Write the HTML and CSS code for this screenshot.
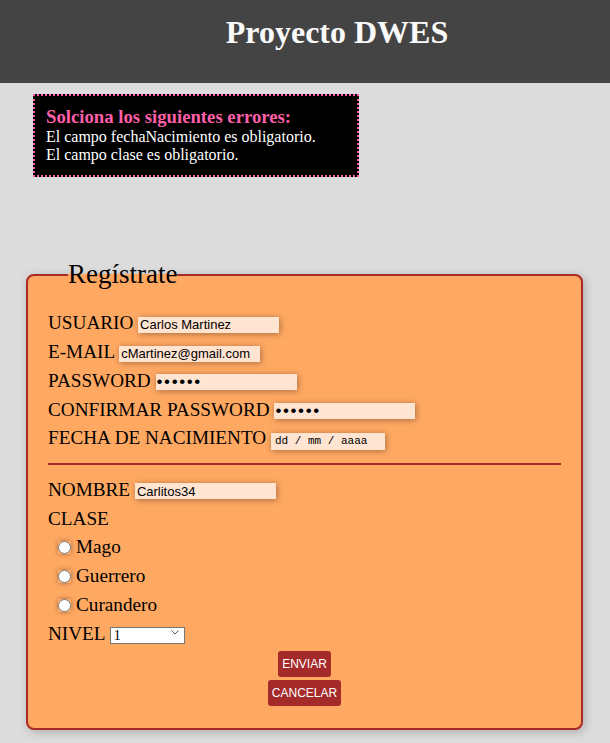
FILE: index.html
```html
<!DOCTYPE html>
<html lang="es">
<head>
<meta charset="utf-8">
<title>Proyecto DWES</title>
<link rel="stylesheet" href="styles.css">
</head>
<body>
<header class="top">
  <h1 class="title">Proyecto DWES</h1>
</header>
<main class="main">
  <div class="errors">
    <h3 class="errors-title">Solciona los siguientes errores:</h3>
    <p class="errors-line">El campo fechaNacimiento es obligatorio.</p>
    <p class="errors-line">El campo clase es obligatorio.</p>
  </div>
  <form class="form">
    <fieldset class="box">
      <legend class="legend">Regístrate</legend>
      <div class="row">USUARIO <input class="field" type="text" value="Carlos Martinez"></div>
      <div class="row">E-MAIL <input class="field" type="email" value="cMartinez@gmail.com"></div>
      <div class="row">PASSWORD <input class="field pass" type="password" value="123456"></div>
      <div class="row">CONFIRMAR PASSWORD <input class="field pass" type="password" value="123456"></div>
      <div class="row">FECHA DE NACIMIENTO <input class="field date" type="text" placeholder="dd / mm / aaaa"></div>
      <hr class="sep">
      <div class="row">NOMBRE <input class="field" type="text" value="Carlitos34"></div>
      <div class="row">CLASE</div>
      <div class="row radio-row"><label class="opt"><input class="radio" type="radio" name="clase">Mago</label></div>
      <div class="row radio-row"><label class="opt"><input class="radio" type="radio" name="clase">Guerrero</label></div>
      <div class="row radio-row"><label class="opt"><input class="radio" type="radio" name="clase">Curandero</label></div>
      <div class="row">NIVEL <span class="select-wrap"><select class="select"><option>1</option><option>2</option><option>3</option></select><svg class="chev" width="8" height="5" viewBox="0 0 8 5"><path d="M0.5 0.5 L4 4 L7.5 0.5" fill="none" stroke="#555" stroke-width="1"/></svg></span></div>
      <div class="actions">
        <button class="btn" type="submit">ENVIAR</button>
        <button class="btn" type="reset">CANCELAR</button>
      </div>
    </fieldset>
  </form>
</main>
</body>
</html>
```

FILE: styles.css
```css
html, body {
  margin: 0;
  padding: 0;
}
body {
  background: #dcdcdc;
  font-family: "Liberation Serif", "Times New Roman", serif;
  color: #000;
}
.top {
  background: #444444;
  height: 83px;
  box-sizing: border-box;
  padding: 14px 0 0 64px;
  text-align: center;
}
.title {
  margin: 0;
  font-size: 32px;
  font-weight: bold;
  color: #fafafa;
  line-height: 37px;
}
.main {
  padding: 11px 0 20px;
}
.errors {
  margin-left: 33px;
  width: 326px;
  box-sizing: border-box;
  background: #000;
  border: 2px dotted #ff5fa8;
  padding: 10px 11px 11px;
  color: #fff;
}
.errors-title {
  margin: 0;
  font-size: 18.72px;
  font-weight: bold;
  color: #ff5fa8;
  line-height: 21.5px;
}
.errors-line {
  margin: 0;
  font-size: 16px;
  line-height: 18.4px;
}
.form {
  margin: 0;
}
.box {
  margin: 82px 27px 0 26px;
  padding: 22px 20px 22px 20px;
  border: 2px solid #a8292a;
  border-radius: 8px;
  background: #ffa862;
  box-shadow: 2px 2px 10px rgba(0, 0, 0, 0.22);
  min-width: 0;
}
.legend {
  margin-left: 20px;
  padding: 0;
  font-size: 27px;
  line-height: 31px;
}
.row {
  font-size: 19.2px;
  line-height: 22px;
  margin-bottom: 6.75px;
}
.field {
  font-family: "Liberation Sans", Arial, sans-serif;
  font-size: 13px;
  width: 141px;
  height: 16px;
  box-sizing: border-box;
  padding: 0 2px;
  border: none;
  outline: none;
  background: #ffe4d2;
  color: #000;
  box-shadow: 1px 1px 6px rgba(0, 0, 0, 0.35);
  vertical-align: baseline;
}
.pass {
  font-size: 17px;
  letter-spacing: 1.6px;
  padding: 0 1px;
}
.date {
  width: 114px;
  height: 17px;
  padding: 0 4px;
  font-family: "Liberation Mono", "Courier New", monospace;
  font-size: 11px;
}
.date::placeholder {
  color: #000;
  opacity: 1;
}
.sep {
  margin: 13px 0 14px;
  height: 0;
  border: none;
  border-top: 2px solid #a8292a;
}
.radio-row {
  padding-left: 5px;
}
.radio {
  width: 13px;
  height: 13px;
  margin: 0 5px 0 5px;
  position: relative;
  top: 1px;
  box-shadow: 0 0 5px rgba(0, 0, 0, 0.35);
  border-radius: 50%;
}
.select-wrap {
  position: relative;
  display: inline-block;
}
.select {
  -webkit-appearance: none;
  appearance: none;
  width: 75px;
  height: 17px;
  box-sizing: border-box;
  font-family: "Liberation Serif", serif;
  font-size: 14px;
  line-height: 15px;
  border: 1px solid #767676;
  border-radius: 0;
  background: #fff;
  color: #000;
  padding: 0 0 0 3px;
  vertical-align: baseline;
}
.chev {
  position: absolute;
  right: 6px;
  top: 7px;
  pointer-events: none;
}
.actions {
  display: flex;
  flex-direction: column;
  align-items: center;
  gap: 3px;
}
.btn {
  background: #a52a2a;
  color: #fff;
  border: none;
  border-radius: 3px;
  font-family: "Liberation Sans", Arial, sans-serif;
  font-size: 12px;
  height: 26px;
  padding: 0 4px;
}
```
